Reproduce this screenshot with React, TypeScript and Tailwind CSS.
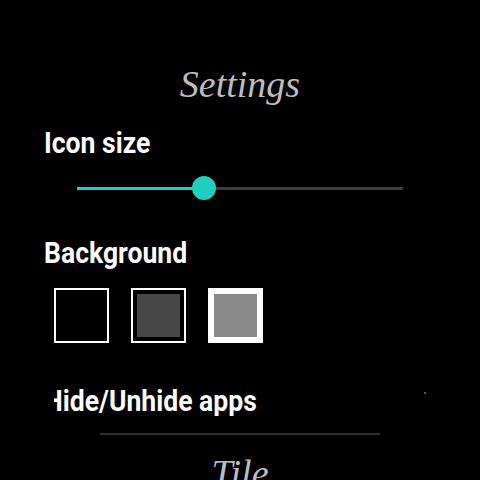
import { useState } from 'react';

const swatches = [
  { id: 'black', fill: 'bg-black' },
  { id: 'dark', fill: 'bg-[#474747]' },
  { id: 'gray', fill: 'bg-[#8a8a8a]' },
];

const label = 'text-white font-bold text-[30px] leading-[30px] scale-x-[0.885] origin-left whitespace-nowrap';

export default function App() {
  const [size] = useState(39);
  const [selected, setSelected] = useState('gray');

  return (
    <div className="w-[480px] h-[480px] bg-black overflow-hidden relative font-['Roboto',sans-serif]">
      <h1 className="pt-[62px] text-center text-[38px] leading-[44px] italic text-[#bdbdbd] font-['Liberation_Serif',serif]">
        Settings
      </h1>

      <div className={`ml-[44px] mt-[22px] ${label}`}>Icon size</div>

      {/* slider */}
      <div className="relative ml-[77px] w-[326px] h-[24px] mt-[18px] flex items-center">
        <div className="h-[3px] w-full bg-[#3c3c3c]" />
        <div className="absolute left-0 h-[3px] bg-[#1fcfbd]" style={{ width: `${size}%` }} />
        <div
          className="absolute w-[24px] h-[24px] rounded-full bg-[#1fcfbd] -translate-x-1/2"
          style={{ left: `${size}%` }}
        />
      </div>

      <div className={`ml-[44px] mt-[38px] ${label}`}>Background</div>

      <div className="flex gap-[22px] pl-[54px] mt-[20px]">
        {swatches.map((s) => {
          const on = selected === s.id;
          return (
            <button
              key={s.id}
              onClick={() => setSelected(s.id)}
              className={
                on
                  ? 'w-[55px] h-[55px] border-[6px] border-white bg-black'
                  : 'w-[55px] h-[55px] border-2 border-white bg-black p-[4px]'
              }
            >
              <div className={`w-full h-full ${s.fill}`} />
            </button>
          );
        })}
      </div>

      <div className="ml-[54px] mt-[43px] overflow-hidden">
        <div className={`-ml-[10px] ${label}`}>Hide/Unhide apps</div>
      </div>
      <div className="absolute left-[424px] top-[392px] w-[2px] h-[2px] bg-[#555]" />

      <div className="mx-[100px] mt-[17px] h-[2px] bg-[#2e2e2e]" />

      <h2 className="mt-[16px] text-center text-[38px] leading-[44px] italic text-[#bdbdbd] font-['Liberation_Serif',serif]">
        Tile
      </h2>
    </div>
  );
}
